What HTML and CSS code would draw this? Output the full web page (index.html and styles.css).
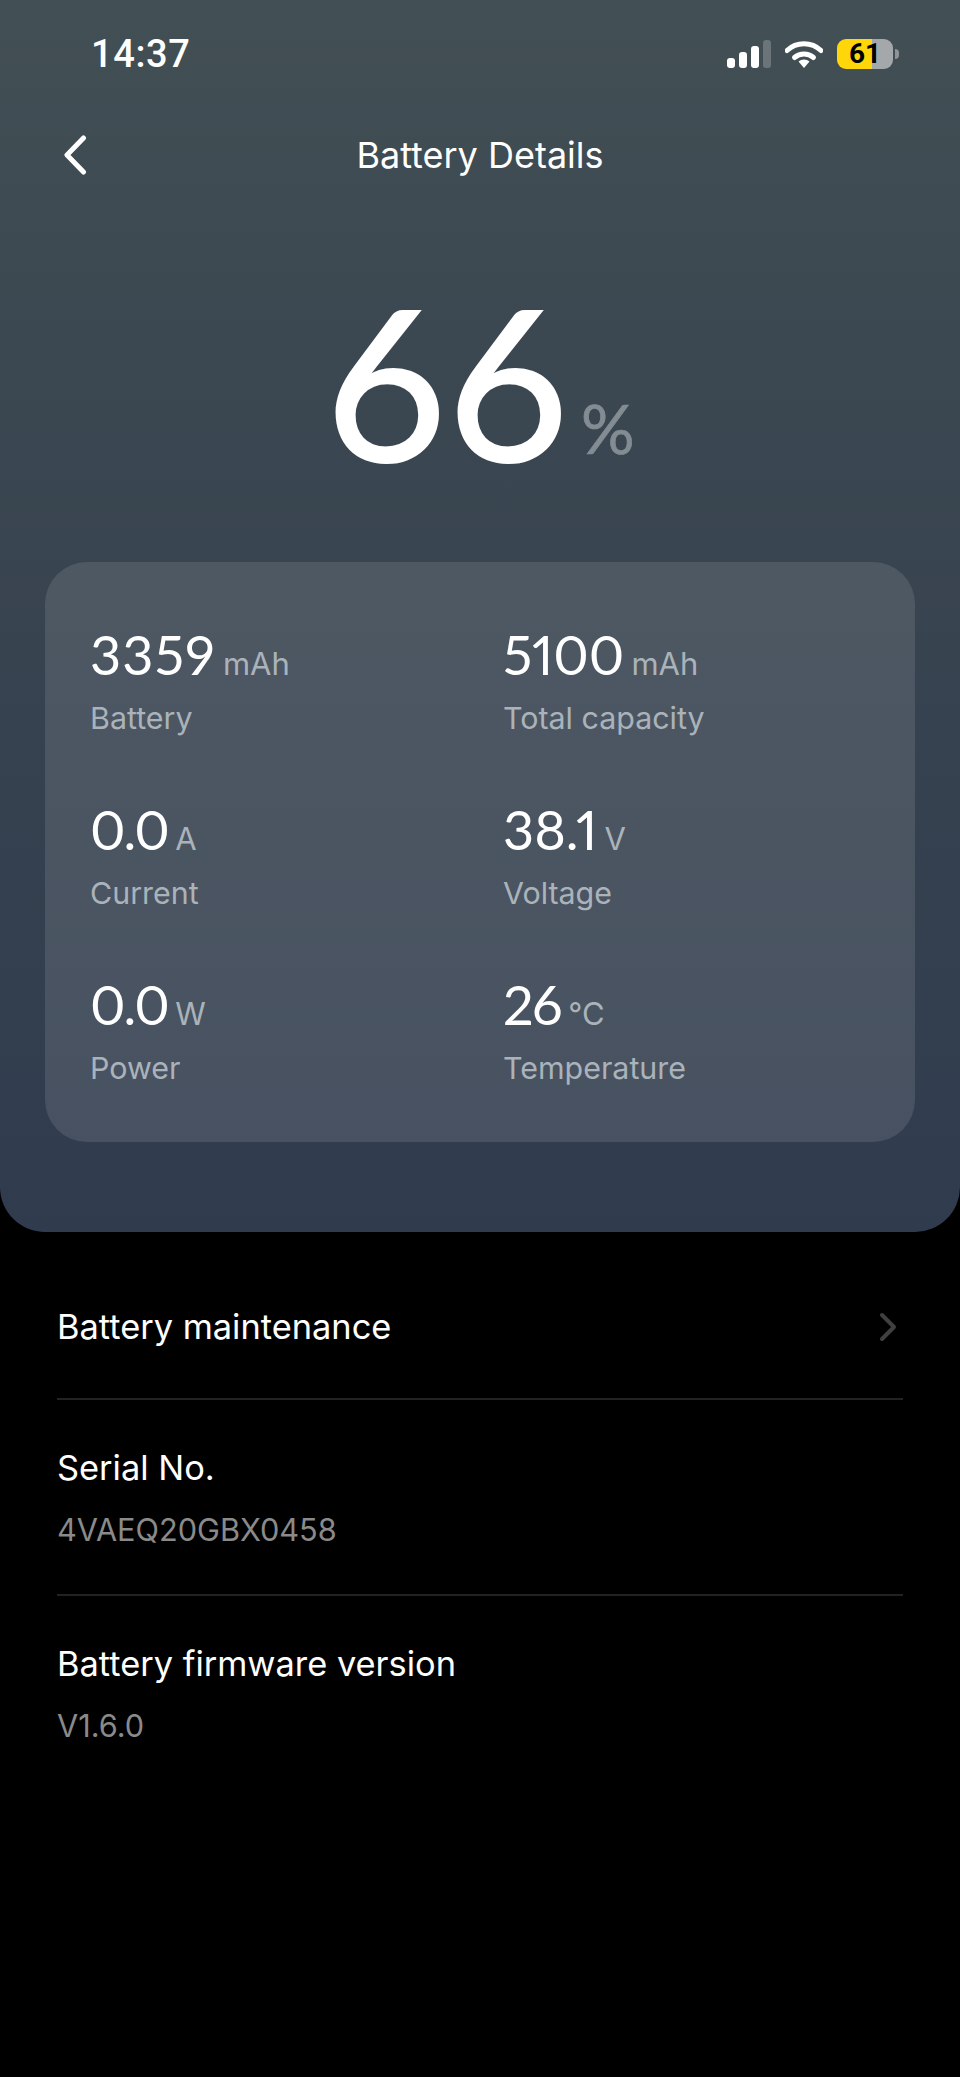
FILE: index.html
```html
<!DOCTYPE html>
<html>
<head>
    <title>Battery Details</title>
    <link rel="stylesheet" href="styles.css">
</head>
<body>

<div class="top-panel">
    <!-- Status bar -->
    <div class="status-bar">
        <span class="time">14:37</span>
        <div class="status-icons">
            <div class="signal">
                <span class="bar bar-1"></span>
                <span class="bar bar-2"></span>
                <span class="bar bar-3"></span>
                <span class="bar bar-4"></span>
            </div>
            <svg class="wifi" width="38" height="28" viewBox="0 0 38 28">
                <path d="M2 10.5C11.5 1.5 26.5 1.5 36 10.5" fill="none" stroke="#fff" stroke-width="5" stroke-linecap="round"/>
                <path d="M9.5 17.5C15 12.8 23 12.8 28.5 17.5" fill="none" stroke="#fff" stroke-width="5" stroke-linecap="round"/>
                <path d="M13.5 21.5C16.5 18.8 21.5 18.8 24.5 21.5L19 28Z" fill="#fff"/>
            </svg>
            <div class="battery">
                <div class="battery-body"><span class="battery-level">61</span></div>
                <span class="battery-nub"></span>
            </div>
        </div>
    </div>

    <!-- Header -->
    <div class="header">
        <svg class="back" width="24" height="40" viewBox="0 0 24 40">
            <path d="M20.5 3L4 20L20.5 37" fill="none" stroke="#fff" stroke-width="5" stroke-linecap="round" stroke-linejoin="round"/>
        </svg>
        <h1>Battery Details</h1>
    </div>

    <!-- Big percent -->
    <div class="percent">
        <span class="percent-value">66</span><span class="percent-sign">%</span>
    </div>

    <!-- Stats -->
    <div class="card">
        <div class="stat">
            <div class="stat-value wide">3359<span class="unit">mAh</span></div>
            <div class="stat-label">Battery</div>
        </div>
        <div class="stat">
            <div class="stat-value">5100<span class="unit">mAh</span></div>
            <div class="stat-label">Total capacity</div>
        </div>
        <div class="stat">
            <div class="stat-value tight">0.0<span class="unit">A</span></div>
            <div class="stat-label">Current</div>
        </div>
        <div class="stat">
            <div class="stat-value">38.1<span class="unit">V</span></div>
            <div class="stat-label">Voltage</div>
        </div>
        <div class="stat">
            <div class="stat-value tight">0.0<span class="unit">W</span></div>
            <div class="stat-label">Power</div>
        </div>
        <div class="stat">
            <div class="stat-value tight">26<span class="unit">°C</span></div>
            <div class="stat-label">Temperature</div>
        </div>
    </div>
</div>

<!-- Info list -->
<div class="list">
    <div class="row row-link">
        <span class="row-title">Battery maintenance</span>
        <svg class="chevron" width="18" height="30" viewBox="0 0 18 30">
            <path d="M3 3L15 15L3 27" fill="none" stroke="#404040" stroke-width="4" stroke-linecap="round" stroke-linejoin="round"/>
        </svg>
    </div>
    <div class="row">
        <div class="row-title">Serial No.</div>
        <div class="row-sub">4VAEQ20GBX0458</div>
    </div>
    <div class="row">
        <div class="row-title">Battery firmware version</div>
        <div class="row-sub">V1.6.0</div>
    </div>
</div>

</body>
</html>
```

FILE: styles.css
```css
body {
    margin: 0;
    height: 2077px;
    background: #000;
    color: #fff;
    font-family: 'Inter', sans-serif;
    overflow: hidden;
}

/* Gradient panel */
.top-panel {
    box-sizing: border-box;
    height: 1232px;
    padding: 0 45px;
    background: linear-gradient(180deg, #424f54 0%, #3a4650 35%, #303b4e 100%);
    border-radius: 0 0 45px 45px;
}

/* Status bar */
.status-bar {
    display: flex;
    justify-content: space-between;
    align-items: center;
    height: 28px;
    padding: 40px 16px 0 46px;
}

.time {
    font-family: 'Roboto', sans-serif;
    font-size: 38px;
    font-weight: 500;
    letter-spacing: 0.6px;
}

.status-icons {
    display: flex;
    align-items: center;
    gap: 14px;
}

.signal {
    display: flex;
    align-items: flex-end;
    gap: 4px;
    height: 28px;
}

.bar {
    width: 8px;
    background: #fff;
    border-radius: 3px;
}

.bar-1 { height: 10px; }
.bar-2 { height: 16px; }
.bar-3 { height: 22px; }
.bar-4 { height: 28px; background: #6b7579; }

.battery {
    display: flex;
    align-items: center;
    gap: 2px;
}

.battery-body {
    width: 56px;
    height: 30px;
    border-radius: 9px;
    background: linear-gradient(90deg, #ffd60a 0 35px, #a5a8aa 35px);
    text-align: center;
}

.battery-level {
    font-family: 'Roboto', sans-serif;
    color: #000;
    font-size: 28px;
    font-weight: 700;
    line-height: 30px;
}

.battery-nub {
    width: 4px;
    height: 10px;
    background: #8d9396;
    border-radius: 0 5px 5px 0;
}

/* Header */
.header {
    display: flex;
    align-items: center;
    justify-content: center;
    height: 44px;
    margin-top: 65px;
    position: relative;
}

.back {
    position: absolute;
    left: 18px;
    top: 2px;
}

h1 {
    margin: 0;
    font-size: 36px;
    font-weight: 400;
}

/* Big number */
.percent {
    display: flex;
    align-items: baseline;
    justify-content: center;
    height: 385px;
    padding-top: 63px;
    box-sizing: border-box;
    font-family: 'Lato', sans-serif;
}

.percent-value {
    font-size: 210px;
    line-height: 280px;
    font-weight: 400;
    -webkit-text-stroke: 2px #fff;
}

.percent-sign {
    font-size: 67px;
    color: #828c92;
    margin-left: 12px;
    position: relative;
    top: -7px;
    -webkit-text-stroke: 0.7px #828c92;
}

/* Stat card */
.card {
    display: grid;
    grid-template-columns: 413px 1fr;
    grid-auto-rows: 175px;
    height: 580px;
    box-sizing: border-box;
    padding: 61px 45px 0;
    background: rgba(255, 255, 255, 0.11);
    border-radius: 42px;
}

.stat-value {
    font-family: 'Lato', sans-serif;
    font-size: 54px;
    line-height: 64px;
    font-variant-numeric: proportional-nums;
}

/* digit spacing differs a bit per value */
.wide { letter-spacing: 1.2px; }
.tight { letter-spacing: -1.5px; }

.unit {
    font-family: 'Inter', sans-serif;
    font-size: 31px;
    letter-spacing: 0;
    color: #aab3ba;
    margin-left: 7px;
}

.stat-label {
    margin-top: 4px;
    font-size: 30.4px;
    line-height: 36px;
    color: #aab3ba;
}

/* List */
.list {
    padding: 0 57px;
}

.row {
    box-sizing: border-box;
    height: 196px;
    padding-top: 46px;
    border-bottom: 2px solid #222;
}

.row:last-child {
    border-bottom: none;
}

.row-link {
    display: flex;
    align-items: center;
    justify-content: space-between;
    height: 168px;
    padding: 24px 6px 0 0;
}

.row-title {
    font-size: 34.4px;
    line-height: 44px;
}

.row-sub {
    margin-top: 20px;
    font-size: 30.7px;
    line-height: 40px;
    color: #8a8a8a;
}
```
